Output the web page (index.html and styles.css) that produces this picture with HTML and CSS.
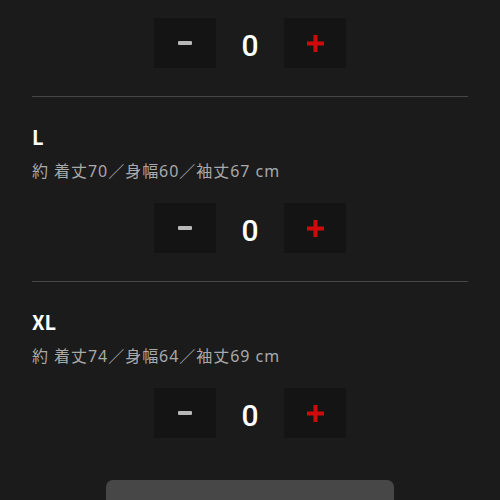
FILE: index.html
```html
<!DOCTYPE html>
<html lang="ja">
<head>
<meta charset="utf-8">
<title>Size</title>
<link rel="stylesheet" href="styles.css">
</head>
<body>
<div class="page">
  <div class="qty first">
    <button class="btn minus" aria-label="minus"><svg width="14" height="4" viewBox="0 0 14 4"><rect width="14" height="4" rx="1" fill="#b8b8b8"/></svg></button>
    <span class="num">0</span>
    <button class="btn plus" aria-label="plus"><svg width="17" height="17" viewBox="0 0 17 17"><rect x="6.5" y="0" width="4" height="17" fill="#d00a0a"/><rect x="0" y="6.5" width="17" height="4" fill="#d00a0a"/></svg></button>
  </div>

  <section class="size">
    <h3 class="size-name">L</h3>
    <p class="size-desc">約 着丈70／身幅60／袖丈67 cm</p>
    <div class="qty">
      <button class="btn minus" aria-label="minus"><svg width="14" height="4" viewBox="0 0 14 4"><rect width="14" height="4" rx="1" fill="#b8b8b8"/></svg></button>
      <span class="num">0</span>
      <button class="btn plus" aria-label="plus"><svg width="17" height="17" viewBox="0 0 17 17"><rect x="6.5" y="0" width="4" height="17" fill="#d00a0a"/><rect x="0" y="6.5" width="17" height="4" fill="#d00a0a"/></svg></button>
    </div>
  </section>

  <section class="size last">
    <h3 class="size-name">XL</h3>
    <p class="size-desc">約 着丈74／身幅64／袖丈69 cm</p>
    <div class="qty">
      <button class="btn minus" aria-label="minus"><svg width="14" height="4" viewBox="0 0 14 4"><rect width="14" height="4" rx="1" fill="#b8b8b8"/></svg></button>
      <span class="num">0</span>
      <button class="btn plus" aria-label="plus"><svg width="17" height="17" viewBox="0 0 17 17"><rect x="6.5" y="0" width="4" height="17" fill="#d00a0a"/><rect x="0" y="6.5" width="17" height="4" fill="#d00a0a"/></svg></button>
    </div>
  </section>

  <div class="actions">
    <button class="cart"></button>
  </div>
</div>
</body>
</html>
```

FILE: styles.css
```css
html, body {
  margin: 0;
  padding: 0;
  background: #1b1b1b;
  height: 100%;
  overflow: hidden;
}
body {
  font-family: "Noto Sans CJK JP", "Noto Sans", sans-serif;
  color: #fff;
}
.page {
  padding: 0 32px;
}
.qty {
  display: flex;
  justify-content: center;
  align-items: center;
  height: 50px;
}
.qty.first {
  margin-top: 18px;
  margin-bottom: 28px;
}
.btn {
  width: 62px;
  height: 50px;
  border: none;
  padding: 0;
  margin: 0;
  background: #141414;
  display: flex;
  align-items: center;
  justify-content: center;
}
.num {
  width: 68px;
  text-align: center;
  font-family: Roboto, "Noto Sans", sans-serif;
  font-weight: 500;
  font-size: 30px;
  line-height: 44px;
  padding-top: 6px;
  color: #fff;
}
.size {
  border-top: 1px solid #474747;
  padding-top: 26px;
  padding-bottom: 28px;
}
.size.last {
  padding-bottom: 0;
}
.size-name {
  margin: 0;
  font-size: 20px;
  line-height: 28px;
  font-weight: 700;
  color: #fff;
}
.size-desc {
  margin: 8px 0 20px;
  font-family: "Noto Sans", "Noto Sans CJK JP", sans-serif;
  font-size: 16px;
  line-height: 24px;
  letter-spacing: 0.06em;
  color: #a9a9a9;
}
.actions {
  display: flex;
  justify-content: center;
  margin-top: 42px;
}
.cart {
  width: 288px;
  height: 56px;
  border: none;
  border-radius: 7px;
  background: #474747;
  margin-right: 1px;
}
```
